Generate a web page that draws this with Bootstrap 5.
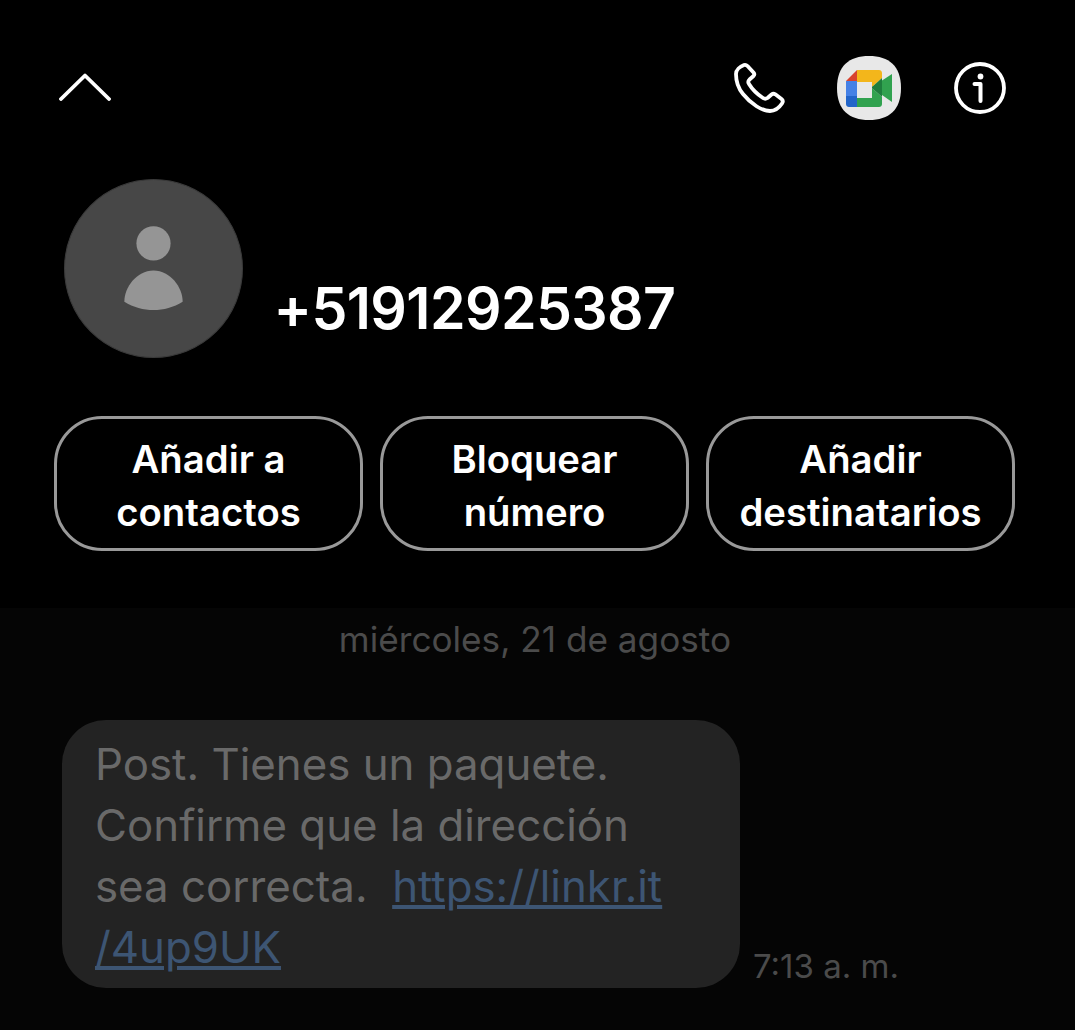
<!DOCTYPE html>
<html lang="es">
<head>
    <meta charset="UTF-8">
    <meta name="viewport" content="width=device-width, initial-scale=1">
    <title>Mensajes</title>
    <link rel="stylesheet" href="https://cdn.jsdelivr.net/npm/bootstrap@5.3.3/dist/css/bootstrap.min.css">
    <style>
        body {
            background-color: #000;
            font-family: "Inter", "Roboto", sans-serif;
        }
        .screen {
            width: 1075px;
            height: 1030px;
            overflow: hidden;
        }
        .top-area {
            height: 608px;
            background-color: #000;
            padding: 56px 69px 0 54px;
        }
        .top-icons {
            height: 64px;
        }
        .back-icon {
            margin-left: 5px;
            margin-top: -2px;
        }
        .meet-icon {
            margin-left: 52px;
            margin-right: 53px;
        }
        .contact-row {
            margin-top: 59px;
            margin-left: 9.5px;
        }
        .avatar-icon {
            width: 179px;
            height: 179px;
            flex-shrink: 0;
        }
        .phone-number {
            color: #fff;
            font-size: 57.2px;
            font-weight: 600;
            line-height: 64px;
            letter-spacing: -0.6px;
            margin-left: 31px;
            margin-bottom: 17px;
        }
        .action-row {
            margin-top: 58px;
            width: 961px;
            gap: 17px;
        }
        .action-btn {
            flex: 1 1 0;
            height: 135px;
            border: 3px solid #999;
            border-radius: 48px;
            color: #fff;
            font-size: 38.3px;
            font-weight: 600;
            line-height: 53px;
            padding: 4px 0 0;
        }
        .chat-area {
            height: 422px;
            background-color: #050505;
        }
        .date-label {
            color: #4b4b4b;
            font-size: 35.2px;
            line-height: 40px;
            padding: 11px 5px 0 0;
        }
        .msg-row {
            margin-top: 61px;
            margin-left: 62px;
        }
        .msg-bubble {
            width: 678px;
            height: 268px;
            background-color: #232323;
            border-radius: 44px;
            padding: 14px 20px 0 33px;
            color: #696969;
            font-size: 43.8px;
            line-height: 61px;
        }
        .msg-link {
            color: #3d5573;
        }
        .msg-time {
            color: #4b4b4b;
            font-size: 33px;
            line-height: 40px;
            margin-left: 13px;
            margin-bottom: 2px;
            white-space: nowrap;
        }
    </style>
</head>
<body class="m-0">
    <main class="screen">
        <section class="top-area">
            <div class="top-icons d-flex align-items-center">
                <svg class="back-icon" width="52" height="28" viewBox="0 0 52 28" fill="none">
                    <path d="M2 26 26 2.500 50 26" stroke="#fff" stroke-width="3.800" stroke-linecap="round" stroke-linejoin="round"/>
                </svg>
                <div class="d-flex align-items-center ms-auto">
                    <svg width="52" height="52" viewBox="0 0 52 52" fill="none">
                        <path d="M3 12C3 8 7 4.500 11 3 12.500 2.500 13.500 3 14.500 4L20.500 10.500C21.500 11.700 21.500 13 20.500 14L16.500 17.500C15 19 15 20.500 16 22 19 27 24 32 30 36 31.500 37 33 37 34.500 36L38.500 32.500C39.800 31.500 41 31.500 42.300 32.300L48.500 37C50 38.200 50 40 49 41.500 46 46 42 49 37 49 29 49 18 42 10 32 5 26 3 18 3 12Z" stroke="#fff" stroke-width="3.800" stroke-linejoin="round"/>
                    </svg>
                    <svg class="meet-icon" width="64" height="64" viewBox="0 0 64 64" fill="none">
                        <path d="M32 0C52 0 64 10 64 32S52 64 32 64 0 54 0 32 12 0 32 0Z" fill="#e8e8e8"/>
                        <path d="M9 25 20 14V25Z" fill="#d8432f"/>
                        <path d="M9 25H20V40H9Z" fill="#4581e6"/>
                        <path d="M9 40H20V51H12C10.300 51 9 49.700 9 48Z" fill="#2265c9"/>
                        <path d="M20 14H42C43.700 14 45 15.300 45 17V22L35 31V26H20Z" fill="#f3b61b"/>
                        <path d="M20 42H35V32L45 41V48C45 49.700 43.700 51 42 51H20Z" fill="#31a24f"/>
                        <path d="M35 31 55 18V46L35 32Z" fill="#31a24f"/>
                        <path d="M35 31 45 22V41L35 32Z" fill="#1e7d3d"/>
                    </svg>
                    <svg width="52" height="52" viewBox="0 0 52 52" fill="none">
                        <circle cx="26" cy="26" r="24" stroke="#fff" stroke-width="3.800"/>
                        <circle cx="26.500" cy="14.500" r="2.900" fill="#fff"/>
                        <path d="M20.500 22H26.500V39" stroke="#fff" stroke-width="4" stroke-linecap="round" stroke-linejoin="round"/>
                    </svg>
                </div>
            </div>

            <div class="contact-row d-flex align-items-end">
                <svg class="avatar-icon" viewBox="0 0 178 178">
                    <circle cx="89" cy="89" r="88.500" fill="#474747" stroke="#3a3a3a"/>
                    <circle cx="89" cy="64" r="17" fill="#959595"/>
                    <path d="M60 122C60 108 72 91 89 91S118 108 118 122C100 133 78 133 60 122Z" fill="#959595"/>
                </svg>
                <div class="phone-number">+51912925387</div>
            </div>

            <div class="action-row d-flex">
                <button type="button" class="btn action-btn">Añadir a<br>contactos</button>
                <button type="button" class="btn action-btn">Bloquear<br>número</button>
                <button type="button" class="btn action-btn">Añadir<br>destinatarios</button>
            </div>
        </section>

        <section class="chat-area">
            <div class="date-label text-center">miércoles, 21 de agosto</div>
            <div class="msg-row d-flex align-items-end">
                <div class="msg-bubble">Post. Tienes un paquete.<br>Confirme que la dirección<br>sea correcta.&nbsp; <a class="msg-link" href="#">https://linkr.it<br>/4up9UK</a></div>
                <div class="msg-time">7:13 a. m.</div>
            </div>
        </section>
    </main>
    <script src="https://cdn.jsdelivr.net/npm/bootstrap@5.3.3/dist/js/bootstrap.bundle.min.js"></script>
</body>
</html>
